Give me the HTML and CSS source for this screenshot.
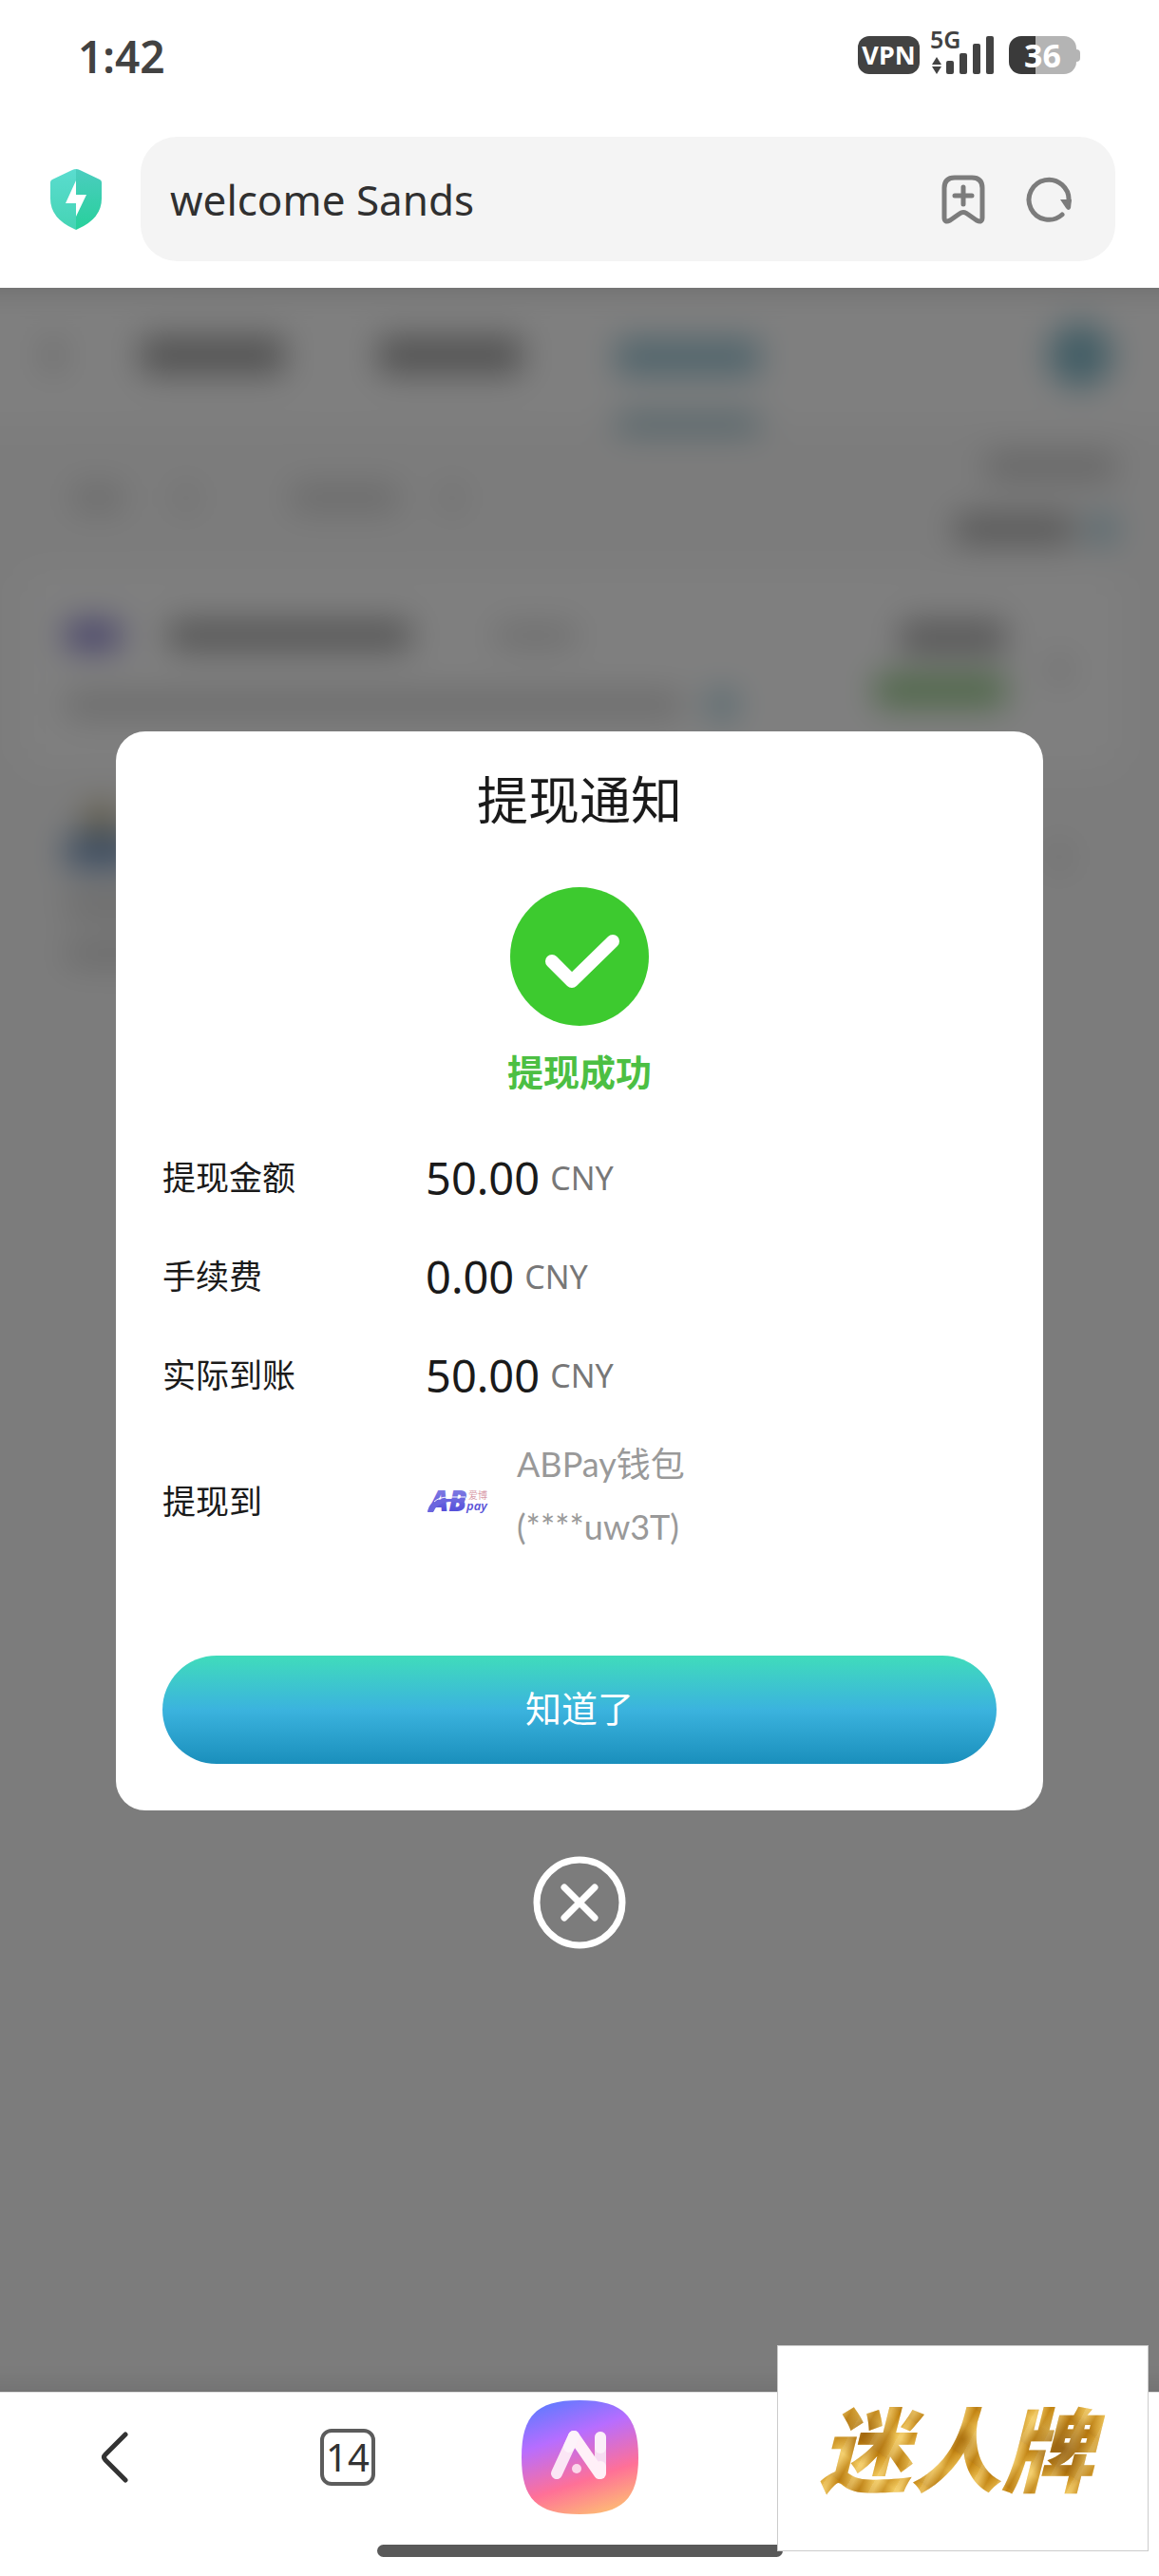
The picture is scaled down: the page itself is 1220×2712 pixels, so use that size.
FILE: index.html
```html
<!DOCTYPE html>
<html lang="zh-CN">
<head>
<meta charset="utf-8">
<meta name="viewport" content="width=device-width, initial-scale=1">
<title>welcome Sands</title>
<link rel="stylesheet" href="styles.css">
</head>
<body>
<header class="browser-top">
  <div class="status-bar">
    <span class="clock">1:42</span>
    <div class="status-icons">
      <span class="vpn">VPN</span>
      <svg class="signal" width="68" height="46" viewBox="0 0 68 46" role="img" aria-label="5G">
        <g fill="#424242">
          <text class="signal-text" x="0" y="19">5G</text>
          <path d="M7 28l5 8H2zM2 38h10l-5 8z"/>
          <rect x="17" y="32" width="8" height="14" rx="2"/>
          <rect x="31" y="24" width="8" height="22" rx="2"/>
          <rect x="45" y="14" width="8" height="32" rx="2"/>
          <rect x="59" y="6" width="8" height="40" rx="2"/>
        </g>
      </svg>
      <span class="battery"><span class="battery-level">36</span></span>
    </div>
  </div>
  <div class="address-row">
    <svg class="shield" width="54" height="64" viewBox="0 0 54 64" aria-hidden="true">
      <defs>
        <linearGradient id="shieldL" x1="0" y1="0" x2="0" y2="1"><stop offset="0" stop-color="#5adccf"/><stop offset="1" stop-color="#45d4b4"/></linearGradient>
        <linearGradient id="shieldR" x1="0" y1="0" x2="0" y2="1"><stop offset="0" stop-color="#4bcdbf"/><stop offset="1" stop-color="#27d09b"/></linearGradient>
      </defs>
      <path fill="url(#shieldL)" d="M27 0Q25 0 23 1L2 11Q0 12 0 14V31Q0 52 25 63L27 64Z"/>
      <path fill="url(#shieldR)" d="M27 0Q29 0 31 1L52 11Q54 12 54 14V31Q54 52 29 63L27 64Z"/>
      <path fill="#fff" d="M27 12V27H38L27 50V36H16Z"/>
    </svg>
    <div class="address-box">
      <input class="address-input" type="text" value="welcome Sands" aria-label="地址栏">
      <button class="icon-button" type="button" aria-label="添加书签">
        <svg width="46" height="52" viewBox="0 0 46 52" fill="none" stroke="#7c7c7c" stroke-width="5" stroke-linecap="round" stroke-linejoin="round"><path d="M3 14Q3 3 14 3H32Q43 3 43 14V45Q43 51 37 48L27 41Q23 38 19 41L9 48Q3 51 3 45ZM23 13V31M14 22H32"/></svg>
      </button>
      <button class="icon-button" type="button" aria-label="刷新">
        <svg width="50" height="50" viewBox="0 0 50 50" fill="none" stroke="#7c7c7c" stroke-width="5" stroke-linecap="round"><path d="M39 41A21 21 0 1 1 46 27"/><path fill="#7c7c7c" stroke="none" d="M37 25H49L48 34Q46 38 43 34Z"/></svg>
      </button>
    </div>
  </div>
</header>

<main class="page">
  <div class="backdrop" aria-hidden="true">
    <div class="bd-nav">
      <i class="blob chevron"></i>
      <i class="blob tab"></i>
      <i class="blob tab"></i>
      <span class="bd-active"><i class="blob tab teal"></i><i class="blob underline"></i></span>
      <i class="blob avatar"></i>
    </div>
    <div class="bd-filter">
      <i class="blob filter-short"></i><i class="blob arrow"></i>
      <i class="blob filter-long"></i><i class="blob arrow"></i>
      <span class="bd-total"><i class="blob total-a"></i><span class="bd-pair"><i class="blob total-b"></i><i class="blob dot"></i></span></span>
    </div>
    <div class="bd-card">
      <div class="bd-info">
        <span class="bd-pair"><i class="blob logo"></i><i class="blob name"></i><i class="blob mask"></i></span>
        <span class="bd-pair"><i class="blob order"></i><i class="blob dot"></i></span>
      </div>
      <div class="bd-amount"><i class="blob sum"></i><i class="blob state"></i></div>
      <i class="blob arrow"></i>
    </div>
    <div class="bd-card bd-card-plain">
      <div class="bd-info">
        <span class="bd-coin"><i class="blob hair"></i><i class="blob shirt"></i></span>
        <i class="blob order"></i>
        <i class="blob order"></i>
      </div>
      <i class="blob arrow"></i>
    </div>
  </div>

  <div class="overlay">
    <section class="modal" role="dialog" aria-modal="true" aria-labelledby="title">
      <h1 class="title" id="title">提现通知</h1>
      <svg class="tick" width="146" height="146" viewBox="0 0 146 146" aria-hidden="true">
        <circle cx="73" cy="73" r="73" fill="#3dca2f"/>
        <path d="M44 78L65 99L108 57" fill="none" stroke="#fff" stroke-width="14" stroke-linecap="round" stroke-linejoin="round"/>
      </svg>
      <p class="state-text">提现成功</p>
      <dl class="details">
        <div class="row"><dt>提现金额</dt><dd><span class="amount">50.00</span><span class="unit">CNY</span></dd></div>
        <div class="row"><dt>手续费</dt><dd><span class="amount">0.00</span><span class="unit">CNY</span></dd></div>
        <div class="row"><dt>实际到账</dt><dd><span class="amount">50.00</span><span class="unit">CNY</span></dd></div>
        <div class="row row-wallet"><dt>提现到</dt><dd>
          <svg class="wallet-logo" width="72" height="56" viewBox="0 0 72 56" role="img" aria-label="AB爱博pay">
            <defs><linearGradient id="ab" x1="0" y1="0" x2="0" y2="1"><stop offset="0" stop-color="#8f8be6"/><stop offset="1" stop-color="#453fd6"/></linearGradient></defs>
            <text class="logo-ab" x="4" y="38" fill="url(#ab)">AB</text>
            <path d="M2 39Q4 25 21 25H42L41 28H25Q12 29 8 39Z" fill="#6b66de"/>
            <path d="M9 28Q14 23 25 23H42" fill="none" stroke="#fff" stroke-width="1"/>
            <text class="logo-cn" x="45" y="25" fill="#d89aa8">爱博</text>
            <text class="logo-pay" x="43" y="37" fill="#5a55d8">pay</text>
          </svg>
          <span class="wallet-name">ABPay钱包<br>(****uw3T)</span>
        </dd></div>
      </dl>
      <button class="confirm" type="button">知道了</button>
    </section>
    <button class="close" type="button" aria-label="关闭">
      <svg width="98" height="98" viewBox="0 0 98 98" fill="none" stroke="#fff" stroke-width="7" stroke-linecap="round"><circle cx="49" cy="49" r="45"/><path d="M33 33L65 65M65 33L33 65"/></svg>
    </button>
  </div>
</main>

<footer class="browser-bottom">
  <nav class="toolbar">
    <button class="icon-button" type="button" aria-label="返回">
      <svg width="32" height="56" viewBox="0 0 32 56" fill="none" stroke="#333" stroke-width="5" stroke-linecap="round" stroke-linejoin="round"><path d="M26 4L5 25Q2 28 5 31L26 52"/></svg>
    </button>
    <button class="tab-count" type="button" aria-label="14 个标签页">14</button>
    <button class="icon-button" type="button" aria-label="AI">
      <svg width="123" height="120" viewBox="0 0 123 120">
        <defs>
          <linearGradient id="ai" x1="38" y1="0" x2="80" y2="124" gradientUnits="userSpaceOnUse"><stop offset="0" stop-color="#6679ff"/><stop offset=".3" stop-color="#b76dff"/><stop offset=".68" stop-color="#ff7097"/><stop offset="1" stop-color="#fdbd74"/></linearGradient>
        </defs>
        <path fill="url(#ai)" d="M61 0C106 0 123 16 123 60S106 120 61 120 0 104 0 60 16 0 61 0Z"/>
        <g fill="none" stroke-width="12" stroke-linecap="round" stroke-linejoin="round">
          <path stroke="#f6dcf2" d="M83 39V70"/>
          <path stroke="#fff" stroke-opacity=".55" d="M83 39V50"/>
          <path stroke="#fff0f8" d="M55 38L82 77"/>
          <path stroke="#fff0f8" d="M83 70V77"/>
          <path stroke="#fbe6f5" d="M55 38L37 77"/>
          <path stroke="#fff" stroke-opacity=".5" d="M55 38L50 49"/>
        </g>
        <circle cx="58" cy="72" r="5" fill="#fbd6ea"/>
      </svg>
    </button>
  </nav>
  <div class="home-indicator"></div>
  <div class="watermark"><span class="watermark-text">迷人牌</span></div>
</footer>
</body>
</html>
```
FILE: styles.css
```css
* { box-sizing: border-box; }

body {
  margin: 0;
  min-height: 100vh;
  display: flex;
  flex-direction: column;
  background: #fff;
  color: #1a1a1a;
  font-family: "Noto Sans", "Noto Sans CJK SC", sans-serif;
}

button {
  margin: 0;
  padding: 0;
  border: 0;
  background: none;
  font: inherit;
  color: inherit;
}

svg { display: block; }

/* Browser chrome, top */
.browser-top { padding-bottom: 28px; }

.status-bar {
  height: 144px;
  padding: 0 82px 26px 82px;
  display: flex;
  align-items: center;
  justify-content: space-between;
}

.clock { font-size: 46px; font-weight: 600; line-height: 56px; color: #424242; }

.status-icons { display: flex; align-items: flex-end; height: 46px; padding-bottom: 4px; }

.vpn {
  width: 65px;
  height: 40px;
  margin-right: 11px;
  border-radius: 12px;
  background: #424242;
  color: #fff;
  font-size: 27px;
  font-weight: 700;
  line-height: 40px;
  text-align: center;
}

.signal { overflow: visible; margin-right: 15px; }
.signal-text { font-size: 25px; font-weight: 600; }

.battery {
  position: relative;
  width: 71px;
  height: 40px;
  margin-right: 5px;
}
.battery::after {
  content: "";
  position: absolute;
  right: -4px;
  top: 14px;
  width: 5px;
  height: 13px;
  border-radius: 0 4px 4px 0;
  background: #b4b4b4;
}
.battery-level {
  display: block;
  border-radius: 13px;
  background: linear-gradient(90deg, #3a3a3a 39%, #b4b4b4 39%);
  color: #fff;
  font-size: 34px;
  font-weight: 700;
  line-height: 40px;
  text-align: center;
}

.address-row {
  display: flex;
  align-items: center;
  gap: 41px;
  padding: 0 46px 0 53px;
}
.shield { flex: none; }

.address-box {
  flex: 1;
  height: 131px;
  padding: 0 45px 0 30px;
  display: flex;
  align-items: center;
  gap: 42px;
  border-radius: 38px;
  background: #f4f4f4;
}
.address-input {
  flex: 1;
  min-width: 0;
  padding: 0 1px;
  border: 0;
  background: none;
  color: #303030;
  font: 44px/64px "Noto Sans", "Noto Sans CJK SC", sans-serif;
}
.icon-button { display: block; }

/* Web page behind the dialog */
.page {
  flex: 1;
  display: grid;
  overflow: hidden;
  background: #d4d4d4;
}
.page > * { grid-area: 1 / 1; min-width: 0; }

.backdrop {
  margin: 0 -60px;
  padding: 0 60px;
  background: #f9f9f9;
  filter: blur(17px);
}
.blob { flex: none; display: block; height: 32px; border-radius: 8px; background: #aaa; }
.bd-pair { display: flex; align-items: center; }

.bd-nav {
  height: 142px;
  margin: 0 -60px;
  padding: 0 109px 0 108px;
  display: flex;
  align-items: center;
  background: #fff;
}
.chevron { width: 16px; height: 36px; margin-right: 84px; background: #ccc; }
.tab { width: 152px; height: 40px; margin-right: 98px; background: #a6a6a6; }
.teal { background: #a2cad8; }
.bd-active { display: grid; gap: 40px; padding-top: 64px; }
.bd-active .tab { margin-right: 0; }
.underline { width: 152px; height: 20px; background: #9fc4d0; }
.avatar { width: 68px; height: 68px; margin-left: auto; border-radius: 34px; background: #86bccc; }

.bd-filter {
  height: 158px;
  padding: 0 45px 0 76px;
  display: flex;
  align-items: center;
}
.filter-short { width: 54px; margin-right: 56px; background: #dcdcdc; }
.filter-long { width: 114px; margin: 0 46px 0 100px; background: #dadada; }
.arrow { width: 20px; height: 30px; background: #dcdcdc; }
.bd-total { margin-left: auto; display: grid; gap: 34px; justify-items: end; }
.total-a { width: 138px; background: #d0d0d0; }
.total-b { width: 126px; margin-right: 14px; background: #b2b2b2; }
.dot { width: 30px; height: 30px; background: #a8d0de; }

.bd-card {
  height: 204px;
  margin: 0 43px 0 25px;
  padding: 0 52px 0 44px;
  display: flex;
  align-items: center;
  border-radius: 20px;
  background: #fff;
}
.bd-info { flex: 1; display: grid; gap: 42px; }
.logo { width: 58px; height: 30px; margin-right: 50px; background: #8d84d4; }
.name { width: 256px; margin-right: 88px; background: #acacac; }
.mask { width: 86px; height: 24px; background: #dcdcdc; }
.order { width: 650px; height: 28px; margin-right: 26px; background: #d8d8d8; }
.bd-amount { display: grid; gap: 20px; justify-items: end; margin-right: 46px; padding-bottom: 12px; }
.sum { width: 112px; height: 36px; background: #b2b2b2; }
.state { width: 138px; height: 36px; background: #a0d094; }
.bd-coin { display: grid; justify-items: center; width: 76px; }
.hair { width: 38px; background: #c8bc98; }
.shirt { width: 76px; height: 36px; background: #789ac4; }
.bd-card-plain { height: 250px; background: none; }
.bd-card-plain .bd-info { gap: 24px; }
.bd-card-plain .arrow { margin-bottom: 60px; }

/* Dialog */
.overlay {
  position: relative;
  display: flex;
  flex-direction: column;
  align-items: center;
  justify-content: center;
  gap: 48px;
  background: rgba(0, 0, 0, .5);
}
.modal {
  width: 80%;
  padding: 40px 49px 49px;
  display: flex;
  flex-direction: column;
  align-items: center;
  border-radius: 31px;
  background: #fff;
}
.title { margin: 0 0 60px; font-size: 54px; font-weight: 400; line-height: 64px; }
.state-text {
  margin: 22px 0 34px;
  color: #4cbf43;
  font-size: 38px;
  font-weight: 600;
  line-height: 52px;
}
.details { align-self: stretch; margin: 0 0 81px; }
.row { display: flex; align-items: center; height: 104px; }
.row-wallet { height: 162px; }
.row dt { width: 277px; font-size: 35px; line-height: 52px; }
.row dd { margin: 0; display: flex; align-items: center; }
.amount { font-size: 47px; line-height: 64px; }
.unit { margin-left: 11px; color: #777; font-size: 34px; line-height: 64px; }
.wallet-logo { margin-right: 24px; }
.wallet-name {
  padding-bottom: 14px;
  color: #999;
  font-family: Lato, "Noto Sans CJK SC", sans-serif;
  font-size: 36px;
  line-height: 66px;
}
.logo-ab { font-size: 30px; font-weight: 900; font-style: italic; }
.logo-cn { font-size: 10px; }
.logo-pay { font-size: 13px; font-weight: 600; font-style: italic; }

.confirm {
  align-self: stretch;
  height: 114px;
  padding-bottom: 6px;
  border-radius: 57px;
  background: linear-gradient(#40dcbb, #3bb3de 50%, #1a8fbc);
  color: #fff;
  font-size: 38px;
}
.close { display: block; }

/* Browser chrome, bottom */
.browser-bottom { position: relative; height: 194px; border-top: 1px solid #ddd; }
.toolbar {
  height: 160px;
  display: grid;
  grid-template-columns: repeat(5, 1fr);
  align-items: center;
  justify-items: center;
  padding-bottom: 24px;
}
.tab-count {
  width: 58px;
  height: 60px;
  border: 4px solid #5c5c5c;
  border-radius: 12px;
  color: #333;
  font-size: 40px;
  line-height: 50px;
}
.home-indicator {
  width: 35%;
  height: 13px;
  margin: 0 auto;
  border-radius: 7px;
  background: #595959;
}
.watermark {
  position: absolute;
  right: 11px;
  bottom: 26px;
  width: 391px;
  height: 217px;
  padding: 0 14px 6px 0;
  display: flex;
  align-items: center;
  justify-content: center;
  border: 1px solid #ccc;
  background: #fff;
}
.watermark-text {
  padding: 0 16px;
  font-family: "Noto Sans CJK SC", sans-serif;
  font-size: 96px;
  font-weight: 900;
  font-style: italic;
  line-height: 140px;
  color: transparent;
  background:
    radial-gradient(circle at 20% 40%, rgba(140, 80, 0, .6), transparent 12%),
    radial-gradient(circle at 52% 45%, rgba(150, 90, 0, .6), transparent 10%),
    radial-gradient(circle at 85% 52%, rgba(120, 66, 0, .7), transparent 14%),
    repeating-linear-gradient(118deg, rgba(255, 232, 160, .4) 0 4px, rgba(176, 112, 8, .4) 13px, rgba(255, 225, 130, .3) 23px),
    repeating-linear-gradient(35deg, #c08418 0, #edc050 26px, #cc8c14 48px);
  background-clip: text;
  -webkit-background-clip: text;
}
```
